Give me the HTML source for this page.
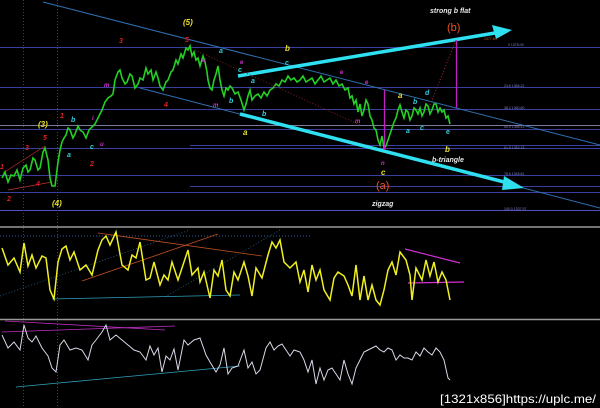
<!DOCTYPE html><html><head><style>body{margin:0;background:#000}svg{display:block}text{font-family:"Liberation Sans",sans-serif;font-style:italic;font-weight:bold}text.n{font-style:normal;font-weight:normal}</style></head><body>
<svg width="600" height="408" viewBox="0 0 600 408" xmlns="http://www.w3.org/2000/svg">
<rect width="600" height="408" fill="#000"/>
<g stroke="#3a3f9f" stroke-width="1">
<line x1="0" y1="47.5" x2="600" y2="47.5"/><line x1="0" y1="87.5" x2="600" y2="87.5"/><line x1="0" y1="109.5" x2="600" y2="109.5"/><line x1="0" y1="125.5" x2="600" y2="125.5" stroke="#7a7aa0"/><line x1="0" y1="129.5" x2="600" y2="129.5"/><line x1="0" y1="148.5" x2="600" y2="148.5"/><line x1="0" y1="175.5" x2="600" y2="175.5"/><line x1="190" y1="186.5" x2="600" y2="186.5"/><line x1="0" y1="192.5" x2="600" y2="192.5"/><line x1="0" y1="210.5" x2="600" y2="210.5" stroke="#5050c0"/><line x1="190" y1="145.5" x2="600" y2="145.5"/>
</g>
<line x1="23.5" y1="0" x2="23.5" y2="408" stroke="#444" stroke-dasharray="1,2"/>
<line x1="57.5" y1="0" x2="57.5" y2="408" stroke="#444" stroke-dasharray="1,2"/>
<g stroke="#2f6fb0" stroke-width="1"><line x1="43" y1="2" x2="600" y2="145"/><line x1="140" y1="88" x2="600" y2="208"/></g>
<g stroke="#c03030" stroke-width="0.7"><line x1="3" y1="173" x2="45" y2="146"/><line x1="8" y1="190" x2="52" y2="182"/></g>
<polyline fill="none" stroke="#23d023" stroke-width="1.6" points="2,178 5,172 8,182 11,175 14,176 17,170 20,180 23,168 26,165 28,172 30,170 33,158 35,160 38,170 40,168 43,152 45,148 48,160 50,178 52,186 55,186 57,170 58,162 60,150 62,142 64,138 66,135 68,128 70,130 73,138 75,134 78,126 80,130 83,132 86,138 89,130 92,127 95,124 97,120 100,114 102,110 105,102 108,98 111,96 113,94 115,80 118,72 120,70 122,78 125,84 127,82 130,74 132,76 135,88 138,84 140,78 143,80 146,68 148,74 151,70 153,80 156,72 158,78 160,86 163,90 166,82 168,80 171,72 173,70 176,60 178,64 181,54 183,58 186,48 188,50 190,46 192,56 194,52 196,60 198,58 200,66 203,56 205,62 207,72 208,80 210,88 212,90 214,80 216,74 218,66 220,80 222,90 224,96 226,88 228,90 230,86 232,88 235,94 238,92 241,100 244,110 246,104 248,96 250,90 252,100 255,96 258,94 261,98 264,92 267,96 270,90 273,88 276,84 279,86 282,80 285,82 288,76 291,80 294,78 297,82 300,80 303,76 306,82 309,80 312,78 315,84 318,80 321,76 324,82 327,80 330,78 333,84 336,80 339,86 342,84 345,90 348,88 350,98 352,96 354,104 356,100 358,112 360,104 362,116 364,110 366,100 368,104 370,116 372,120 374,128 376,130 378,140 380,145 382,136 384,148 386,146 388,140 390,134 392,128 394,122 396,118 398,110 400,105 402,112 404,118 406,110 408,112 410,120 412,116 414,108 416,110 418,114 420,108 422,116 424,112 426,104 428,106 430,114 432,110 434,104 436,104 438,112 440,108 442,112 444,110 446,118 448,116 450,124"/>
<g stroke="#2ee0f0" stroke-width="3.5" fill="#2ee0f0">
<line x1="238" y1="76" x2="495" y2="33"/><polygon points="512,30 492,25 496,39" stroke="none"/>
<line x1="240" y1="114" x2="508" y2="183"/><polygon points="524,188 504,176 502,190" stroke="none"/>
</g>
<g stroke="#c020c0" stroke-width="1.3"><line x1="456.5" y1="40" x2="456.5" y2="108"/><line x1="384.5" y1="90" x2="384.5" y2="150"/></g>
<line x1="456" y1="40" x2="430" y2="105" stroke="#a03030" stroke-dasharray="1,2"/>
<line x1="195" y1="50" x2="360" y2="125" stroke="#802020" stroke-dasharray="1,2"/>
<g font-size="8" fill="#e8e030"><text x="183" y="25">(5)</text><text x="38" y="127">(3)</text><text x="52" y="206">(4)</text><text x="285" y="51">b</text><text x="243" y="135">a</text><text x="398" y="98">a</text><text x="445" y="152">b</text><text x="381" y="175">c</text></g>
<g font-size="7" fill="#e02020"><text x="0" y="169">1</text><text x="7" y="201">2</text><text x="25" y="150">3</text><text x="36" y="186">4</text><text x="43" y="140">5</text><text x="60" y="118">1</text><text x="90" y="166">2</text><text x="119" y="43">3</text><text x="164" y="107">4</text><text x="185" y="42">5</text></g>
<g font-size="7" fill="#30d0e0"><text x="71" y="122">b</text><text x="67" y="157">a</text><text x="90" y="149">c</text><text x="219" y="53">a</text><text x="238" y="72">c</text><text x="251" y="83">a</text><text x="285" y="65">c</text><text x="229" y="103">b</text><text x="262" y="116">b</text><text x="413" y="104">b</text><text x="425" y="95">d</text><text x="406" y="133">a</text><text x="420" y="130">c</text><text x="446" y="134">e</text></g>
<g font-size="6" fill="#d030d0"><text x="92" y="120">i</text><text x="100" y="146">u</text><text x="104" y="87">m</text><text x="240" y="64">e</text><text x="202" y="62">u</text><text x="213" y="107">m</text><text x="340" y="74">e</text><text x="365" y="84">e</text><text x="355" y="123">m</text><text x="381" y="165">n</text></g>
<text x="376" y="189" font-size="11" fill="#f05020" class="n">(a)</text>
<text x="447" y="31" font-size="11" fill="#f05020" class="n">(b)</text>
<g font-size="7" fill="#e8e8e8"><text x="430" y="13">strong b flat</text><text x="432" y="162">b-triangle</text><text x="372" y="206">zigzag</text></g>
<g font-size="3.5" fill="#8080c0"><text class="n" x="508" y="46">0 1375.09</text><text class="n" x="504" y="87">23.6 1366.22</text><text class="n" x="504" y="109">38.2 1360.80</text><text class="n" x="504" y="128">50.0 1356.43</text><text class="n" x="504" y="149">61.8 1352.18</text><text class="n" x="504" y="175">78.6 1345.81</text><text class="n" x="504" y="210">100.0 1337.97</text><text class="n" x="484" y="40" fill="#c06020">1377.64</text></g>
<line x1="0" y1="227" x2="600" y2="227" stroke="#999" stroke-width="1.5"/>
<line x1="0" y1="319.5" x2="600" y2="319.5" stroke="#999" stroke-width="1.5"/>
<line x1="0" y1="236" x2="310" y2="236" stroke="#2a6090" stroke-dasharray="1,2"/>
<g stroke-width="0.8"><line x1="0" y1="296" x2="190" y2="230" stroke="#2a6090" stroke-dasharray="1,2"/><line x1="165" y1="297" x2="280" y2="230" stroke="#2a6090" stroke-dasharray="1,2"/><line x1="82" y1="281" x2="218" y2="234" stroke="#c05020"/><line x1="98" y1="233" x2="262" y2="256" stroke="#c05020"/><line x1="52" y1="299" x2="240" y2="295" stroke="#30a0c0"/><line x1="405" y1="249" x2="460" y2="263" stroke="#d030d0" stroke-width="1.2"/><line x1="408" y1="283" x2="464" y2="282" stroke="#d030d0" stroke-width="1.2"/></g>
<polyline fill="none" stroke="#f0f020" stroke-width="1.5" points="2,248 8,265 14,258 20,272 24,243 28,266 32,255 36,268 42,256 46,258 50,290 54,299 58,262 62,249 66,246 70,260 74,252 80,270 86,265 92,275 98,250 102,240 106,236 110,245 116,232 122,265 128,270 132,255 136,258 140,242 146,280 150,278 154,262 160,285 164,275 168,280 172,262 178,280 184,262 188,250 192,275 198,268 200,282 204,272 210,298 214,270 218,276 222,260 226,290 230,296 234,272 238,280 244,262 248,276 252,296 256,268 262,278 268,255 272,242 276,248 280,240 284,262 290,268 296,262 300,282 304,270 308,292 312,265 316,280 320,270 324,290 330,300 334,278 338,272 344,276 348,285 352,296 356,265 360,300 364,276 368,300 372,285 376,300 380,305 384,290 388,270 392,262 396,275 400,252 406,260 410,275 412,300 416,268 422,280 426,260 430,276 434,262 438,282 442,272 446,280 450,300"/>
<g stroke-width="0.8"><line x1="2" y1="332" x2="175" y2="326" stroke="#c030c0"/><line x1="5" y1="321" x2="165" y2="330" stroke="#c030c0"/><line x1="16" y1="387" x2="240" y2="366" stroke="#30a0c0"/></g>
<polyline fill="none" stroke="#d8d8e8" stroke-width="1" points="2,335 8,348 14,342 20,350 24,325 28,338 32,342 36,336 42,348 48,356 52,368 56,372 60,345 64,340 70,350 76,348 82,350 88,360 92,345 96,340 102,332 106,325 110,340 116,335 122,340 128,345 134,350 140,352 146,360 150,346 154,355 158,348 162,372 166,356 170,360 174,349 178,370 184,340 188,345 194,340 200,338 206,355 210,362 216,372 220,365 224,348 228,374 232,368 238,366 244,350 248,368 252,362 256,374 260,370 266,348 270,342 274,350 278,346 282,344 286,350 290,356 294,350 300,352 304,360 308,372 312,360 316,384 320,368 324,380 328,370 332,368 336,374 340,380 344,360 348,374 352,384 356,368 360,360 364,352 368,350 372,348 376,346 380,350 384,352 388,348 392,350 396,360 400,355 404,358 408,358 412,360 416,352 420,356 424,348 428,352 432,355 436,348 440,352 444,360 448,378 450,380"/>
<text class="n" x="440" y="403" font-size="12" fill="#fff" font-family="Liberation Sans Narrow, Liberation Sans, sans-serif" textLength="156" lengthAdjust="spacingAndGlyphs">[1321x856]https://uplc.me/</text>
</svg></body></html>
